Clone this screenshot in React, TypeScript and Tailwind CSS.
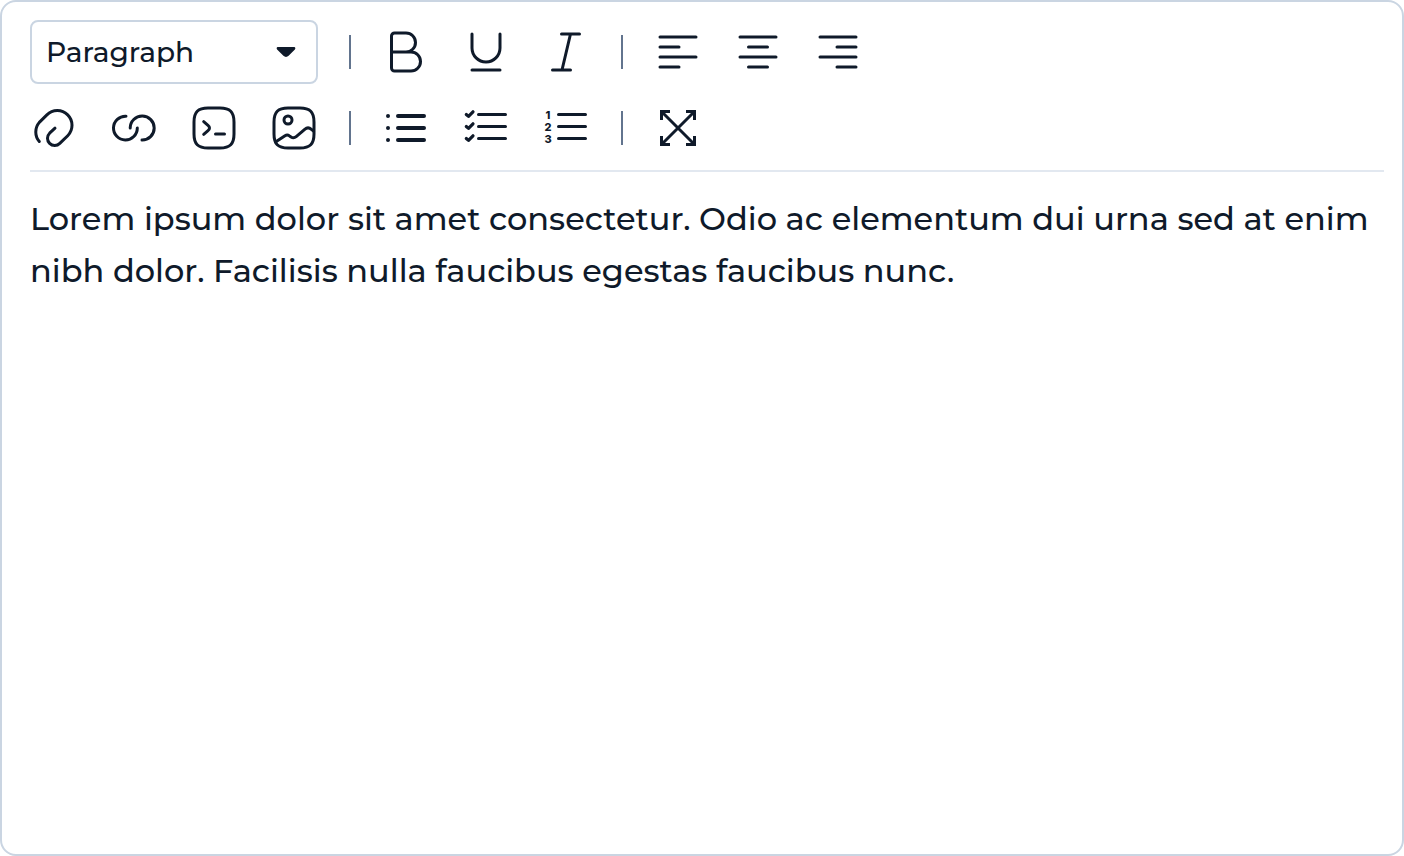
import type { ReactNode } from "react";

function Tool({ label, children }: { label: string; children: ReactNode }) {
  return (
    <button type="button" aria-label={label} title={label} className="size-12 shrink-0 rounded">
      <svg
        viewBox="0 0 48 48"
        className="size-12"
        fill="none"
        stroke="currentColor"
        strokeWidth={3}
        strokeLinecap="round"
        strokeLinejoin="round"
        aria-hidden="true"
      >
        {children}
      </svg>
    </button>
  );
}

function Separator() {
  return <div role="separator" className="-mx-px h-[34px] w-0.5 shrink-0 bg-slate-500" />;
}

function Frame() {
  return <path d="M18 4h12C40 4 44 8 44 18v12C44 40 40 44 30 44H18C8 44 4 40 4 30V18C4 8 8 4 18 4z" />;
}

function BlockSelect() {
  return (
    <div className="relative w-72 shrink-0">
      <select
        aria-label="Block style"
        defaultValue="Paragraph"
        className="h-16 w-full appearance-none rounded-lg border-2 border-slate-300 bg-white pl-3.5 pr-14 text-[28px] font-medium"
      >
        <option>Paragraph</option>
        <option>Heading</option>
      </select>
      <svg
        viewBox="0 0 20 10"
        className="pointer-events-none absolute right-[22px] top-[27px] h-2.5 w-5"
        fill="currentColor"
        aria-hidden="true"
      >
        <path d="M2 0h16c1.300 0 1.800 1.500.9 2.400L12.600 8.800c-1.500 1.500-3.700 1.500-5.200 0L1.100 2.400C.2 1.500.7 0 2 0z" />
      </svg>
    </div>
  );
}

export default function App() {
  return (
    <main className="flex min-h-screen flex-col rounded-2xl border-2 border-slate-300 bg-white py-[18px] pl-7 pr-[18px] font-['Montserrat','Inter',sans-serif] text-[#0f1a2a]">
      <div role="toolbar" aria-label="Formatting" className="flex flex-col gap-5 border-b-2 border-slate-200 pb-[18px]">
        <div className="flex items-center gap-8">
          <BlockSelect />
          <Separator />
          <Tool label="Bold">
            <path d="M9.500 24V8a3 3 0 0 1 3-3H24a9.500 9.500 0 0 1 0 19H9.500M24 24h5a9.500 9.500 0 0 1 0 19H12.500a3 3 0 0 1-3-3V24" />
          </Tool>
          <Tool label="Underline">
            <path d="M10 6v14a14 14 0 0 0 28 0V6M10 42h28" />
          </Tool>
          <Tool label="Italic">
            <path d="M19.500 6h18M10.500 42h18M28.500 6L20 42" />
          </Tool>
          <Separator />
          <Tool label="Align left">
            <path d="M6 9h36M6 19h19M6 29h36M6 39h19" />
          </Tool>
          <Tool label="Align center">
            <path d="M6 9h36M14.500 19h19M6 29h36M14.500 39h19" />
          </Tool>
          <Tool label="Align right">
            <path d="M6 9h36M23 19h19M6 29h36M23 39h19" />
          </Tool>
        </div>
        <div className="flex items-center gap-8">
          <Tool label="Attach file">
            <path d="M9.300 37.500A14.700 14.700 0 0 1 9.300 18.400L16.900 10.900A14.700 14.700 0 0 1 37.700 31.700L29.800 39.400A7.200 7.200 0 0 1 19.600 29.200L25 24.200" />
          </Tool>
          <Tool label="Insert link">
            <path d="M16 12.200A11.900 11.900 0 1 0 27.300 24M32 36A12 12 0 1 0 20.200 24" />
          </Tool>
          <Tool label="Code block">
            <Frame />
            <path d="M13.700 17.700l4.300 3.600c2 1.700 2 3.700 0 5.400l-4.300 3.600M25.500 30h9" />
          </Tool>
          <Tool label="Insert image">
            <Frame />
            <circle cx="18" cy="16" r="4" />
            <path d="M5.500 38l9.500-6.300c1.600-1 3-.9 4.500.2l1.500 1c1.800 1.200 3.500 1.100 5.200-.3l8.500-7.300c2.200-1.900 4.500-1.900 6.700 0l2.200 1.900" />
          </Tool>
          <Separator />
          <Tool label="Bulleted list">
            <path strokeWidth="4" d="M6 12h.01M6 24h.01M6 36h.01M16 12h26M16 24h26M16 36h26" />
          </Tool>
          <Tool label="Checklist">
            <path d="M16.500 10.500h27M16.500 22.500h27M16.500 34.500h27" />
            <path strokeWidth="3.200" d="M4.300 10.500l2.200 1.900 4.500-4.600M4.300 22.500l2.200 1.900 4.500-4.600M4.300 34.500l2.200 1.900 4.500-4.600" />
          </Tool>
          <Tool label="Numbered list">
            <path d="M16.500 10.500h27M16.500 22.500h27M16.500 34.500h27" />
            <g fill="currentColor" stroke="none" textAnchor="middle" className="font-['Inter'] text-[11px] font-extrabold">
              <text x="6" y="15">1</text>
              <text x="6" y="27">2</text>
              <text x="6" y="39">3</text>
            </g>
          </Tool>
          <Separator />
          <Tool label="Fullscreen">
            <path strokeLinecap="butt" strokeLinejoin="miter" d="M7.500 16V7.500H16M32 7.500h8.500V16M40.500 32v8.500H32M16 40.500H7.500V32M7.500 7.500l33 33M40.500 7.500l-33 33" />
          </Tool>
        </div>
      </div>
      <textarea
        aria-label="Content"
        className="mt-[21px] block w-full flex-1 resize-none bg-transparent text-[32px] leading-[52px] font-medium outline-none"
        defaultValue="Lorem ipsum dolor sit amet consectetur. Odio ac elementum dui urna sed at enim nibh dolor. Facilisis nulla faucibus egestas faucibus nunc."
      />
    </main>
  );
}
